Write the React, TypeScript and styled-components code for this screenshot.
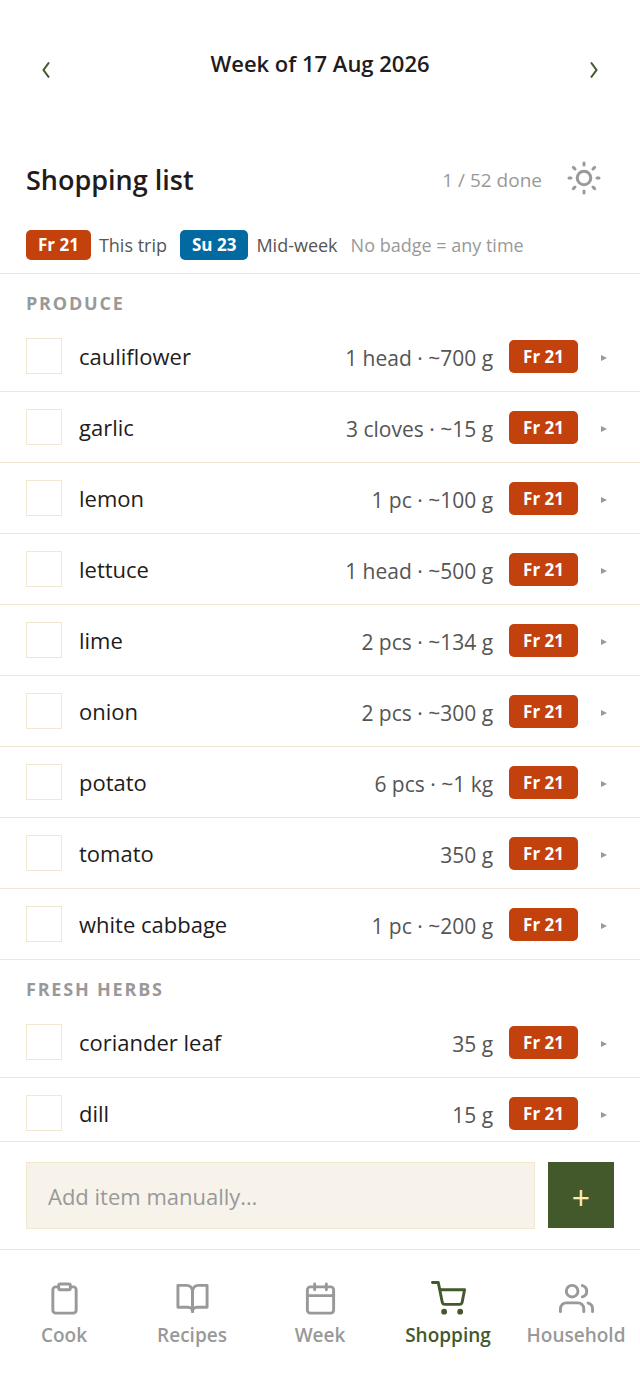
import React, { useState } from "react";
import styled, { createGlobalStyle } from "styled-components";

const color = {
  ink: "#231b1b",
  soft: "#555555",
  muted: "#999999",
  line: "#f1e8d2",
  field: "#f7f2ea",
  green: "#43592b",
  cream: "#fbeeb0",
  thisTrip: "#c2410c",
  midWeek: "#0369a1",
};

const GlobalStyle = createGlobalStyle`
  *, *::before, *::after { box-sizing: border-box; }
  body {
    margin: 0;
    background: #ffffff;
    color: ${color.ink};
    font-family: "Open Sans", "Noto Sans", sans-serif;
    font-size: 22px;
  }
  button, input { font: inherit; color: inherit; }
  button { padding: 0; border: 0; background: none; cursor: pointer; }
`;

const Page = styled.div`
  display: flex;
  flex-direction: column;
  height: 100vh;
`;

const WeekBar = styled.header`
  display: flex;
  align-items: flex-start;
  justify-content: space-between;
  padding: 47px 26px 59px;
`;

const WeekTitle = styled.h1`
  margin: 0;
  font-size: 22px;
  font-weight: 600;
  line-height: 32px;
`;

const ArrowButton = styled.button`
  display: flex;
  align-items: center;
  justify-content: center;
  width: 40px;
  height: 46px;
  color: ${color.green};
`;

const ListHead = styled.div`
  display: flex;
  align-items: center;
  padding: 0 26px;
  height: 52px;
`;

const ListTitle = styled.h2`
  flex: 1;
  margin: 0;
  padding-top: 4px;
  font-size: 27px;
  font-weight: 600;
  line-height: 40px;
`;

const Progress = styled.span`
  padding-top: 4px;
  color: ${color.muted};
  font-size: 19px;
`;

const ThemeButton = styled.button`
  display: flex;
  align-items: center;
  justify-content: center;
  width: 60px;
  height: 52px;
  margin-left: 12px;
  color: ${color.muted};
`;

const Legend = styled.div`
  display: flex;
  flex-wrap: wrap;
  align-items: center;
  gap: 13px;
  padding: 26px 26px 13px;
  border-bottom: 1px solid ${color.line};
`;

const LegendItem = styled.span<{ $muted?: boolean }>`
  display: flex;
  align-items: center;
  gap: 8px;
  color: ${(p) => (p.$muted ? color.muted : color.soft)};
  font-size: 18px;
  line-height: 30px;
`;

const Badge = styled.span<{ $tone?: "thisTrip" | "midWeek"; $large?: boolean }>`
  flex: none;
  padding: 0 ${(p) => (p.$large ? 14 : 12)}px;
  border-radius: 5px;
  background: ${(p) => color[p.$tone ?? "thisTrip"]};
  color: #ffffff;
  font-size: 17px;
  font-weight: 700;
  line-height: ${(p) => (p.$large ? 33 : 30)}px;
`;

const List = styled.main`
  flex: 1;
  min-height: 0;
  overflow-y: auto;
  scrollbar-width: none;
`;

const GroupTitle = styled.h3`
  margin: 0;
  padding: 17px 26px 6px;
  color: ${color.muted};
  font-size: 18px;
  font-weight: 700;
  letter-spacing: 0.1em;
  line-height: 24px;
  text-transform: uppercase;
`;

const Items = styled.ul`
  margin: 0;
  padding: 0;
  list-style: none;
`;

const Row = styled.li`
  display: flex;
  align-items: center;
  gap: 16px;
  height: 71px;
  padding: 0 26px;
  border-bottom: 1px solid ${color.line};
`;

const ItemLabel = styled.label`
  flex: 1;
  display: flex;
  align-items: center;
  gap: 17px;
  line-height: 32px;
`;

const Tick = styled.input`
  appearance: none;
  width: 36px;
  height: 36px;
  margin: 0;
  border: 1px solid ${color.line};
  background: #ffffff;

  &:checked { background: ${color.green}; }
`;

const Quantity = styled.span`
  padding-top: 4px;
  color: ${color.soft};
  font-size: 21px;
  line-height: 32px;
`;

const ExpandButton = styled.button`
  display: flex;
  align-items: center;
  justify-content: center;
  width: 20px;
  height: 36px;
  padding-top: 4px;
  color: ${color.muted};
`;

const AddForm = styled.form`
  display: flex;
  gap: 13px;
  padding: 20px 26px;
  border-top: 1px solid ${color.line};
`;

const AddField = styled.input`
  flex: 1;
  min-width: 0;
  height: 67px;
  padding: 0 21px;
  border: 1px solid ${color.line};
  border-radius: 0;
  background: ${color.field};

  &::placeholder { color: ${color.muted}; opacity: 1; }
`;

const AddButton = styled.button`
  width: 66px;
  height: 66px;
  padding-top: 4px;
  background: ${color.green};
  color: ${color.cream};
  font-size: 32px;
`;

const TabBar = styled.nav`
  display: grid;
  grid-template-columns: repeat(5, 1fr);
  padding: 31px 0 34px;
  border-top: 1px solid ${color.line};
`;

const Tab = styled.a<{ $active?: boolean }>`
  display: flex;
  flex-direction: column;
  align-items: center;
  gap: 3px;
  color: ${(p) => (p.$active ? color.green : color.muted)};
  font-size: 19px;
  font-weight: 600;
  line-height: 32px;
  text-decoration: none;
`;

const Glyph = styled.svg`
  display: block;
  fill: none;
  stroke: currentColor;
  stroke-linecap: round;
  stroke-linejoin: round;
`;

const Icon = ({ size = 35, children }: { size?: number; children: React.ReactNode }) => (
  <Glyph width={size} height={size} viewBox="0 0 24 24" strokeWidth={2} aria-hidden="true">
    {children}
  </Glyph>
);

const Chevron = ({ d }: { d: string }) => (
  <svg width="8" height="16" viewBox="0 0 8 16" fill="none" stroke="currentColor" strokeWidth="2" aria-hidden="true">
    <path d={d} />
  </svg>
);

const groups = [
  {
    title: "Produce",
    items: [
      ["cauliflower", "1 head · ~700 g"],
      ["garlic", "3 cloves · ~15 g"],
      ["lemon", "1 pc · ~100 g"],
      ["lettuce", "1 head · ~500 g"],
      ["lime", "2 pcs · ~134 g"],
      ["onion", "2 pcs · ~300 g"],
      ["potato", "6 pcs · ~1 kg"],
      ["tomato", "350 g"],
      ["white cabbage", "1 pc · ~200 g"],
    ],
  },
  {
    title: "Fresh herbs",
    items: [
      ["coriander leaf", "35 g"],
      ["dill", "15 g"],
    ],
  },
];

const tabs = [
  {
    label: "Cook",
    icon: (
      <>
        <path d="M16 4h2a2 2 0 0 1 2 2v14a2 2 0 0 1-2 2H6a2 2 0 0 1-2-2V6a2 2 0 0 1 2-2h2" />
        <rect x="8" y="2" width="8" height="4" rx="1" />
      </>
    ),
  },
  {
    label: "Recipes",
    icon: (
      <>
        <path d="M2 3h6a4 4 0 0 1 4 4v14a3 3 0 0 0-3-3H2z" />
        <path d="M22 3h-6a4 4 0 0 0-4 4v14a3 3 0 0 1 3-3h7z" />
      </>
    ),
  },
  {
    label: "Week",
    icon: (
      <>
        <rect x="3" y="4" width="18" height="18" rx="2" />
        <path d="M16 2v4M8 2v4M3 10h18" />
      </>
    ),
  },
  {
    label: "Shopping",
    icon: (
      <>
        <circle cx="9" cy="21" r="1" />
        <circle cx="20" cy="21" r="1" />
        <path d="M1 1h4l2.68 13.39a2 2 0 0 0 2 1.61h9.72a2 2 0 0 0 2-1.61L23 6H6" />
      </>
    ),
  },
  {
    label: "Household",
    icon: (
      <>
        <path d="M17 21v-2a4 4 0 0 0-4-4H5a4 4 0 0 0-4 4v2" />
        <circle cx="9" cy="7" r="4" />
        <path d="M23 21v-2a4 4 0 0 0-3-3.87M16 3.13a4 4 0 0 1 0 7.75" />
      </>
    ),
  },
];

export default function App() {
  const [ticked, setTicked] = useState<Record<string, boolean>>({});

  return (
    <Page>
      <GlobalStyle />
      <WeekBar>
        <ArrowButton type="button" aria-label="Previous week">
          <Chevron d="M7 .5L1.5 8L7 15.5" />
        </ArrowButton>
        <WeekTitle>Week of 17 Aug 2026</WeekTitle>
        <ArrowButton type="button" aria-label="Next week">
          <Chevron d="M1 .5L6.5 8L1 15.5" />
        </ArrowButton>
      </WeekBar>

      <ListHead>
        <ListTitle>Shopping list</ListTitle>
        <Progress>1 / 52 done</Progress>
        <ThemeButton type="button" aria-label="Switch theme">
          <Icon size={36}>
            <circle cx="12" cy="12" r="4.5" />
            <path d="M12 2v1.3M12 20.7V22M2 12h1.3M20.7 12H22M4.9 4.9l1.1 1.1M18 18l1.1 1.1M4.9 19.1L6 18M18 6l1.1-1.1" />
          </Icon>
        </ThemeButton>
      </ListHead>

      <Legend>
        <LegendItem><Badge>Fr 21</Badge>This trip</LegendItem>
        <LegendItem><Badge $tone="midWeek">Su 23</Badge>Mid-week</LegendItem>
        <LegendItem $muted>No badge = any time</LegendItem>
      </Legend>

      <List>
        {groups.map((group) => (
          <section key={group.title}>
            <GroupTitle>{group.title}</GroupTitle>
            <Items>
              {group.items.map(([name, quantity]) => (
                <Row key={name}>
                  <ItemLabel>
                    <Tick
                      type="checkbox"
                      checked={!!ticked[name]}
                      onChange={(e) => setTicked({ ...ticked, [name]: e.target.checked })}
                    />
                    {name}
                  </ItemLabel>
                  <Quantity>{quantity}</Quantity>
                  <Badge $large>Fr 21</Badge>
                  <ExpandButton type="button" aria-label={`Details for ${name}`}>
                    <svg width="6" height="6" viewBox="0 0 6 6" aria-hidden="true">
                      <path d="M0 0L6 3L0 6z" fill="currentColor" />
                    </svg>
                  </ExpandButton>
                </Row>
              ))}
            </Items>
          </section>
        ))}
      </List>

      <AddForm onSubmit={(e) => e.preventDefault()}>
        <AddField type="text" aria-label="Add item manually" placeholder="Add item manually…" />
        <AddButton type="submit" aria-label="Add item">+</AddButton>
      </AddForm>

      <TabBar>
        {tabs.map((tab) => (
          <Tab key={tab.label} href={`#${tab.label.toLowerCase()}`} $active={tab.label === "Shopping"}>
            <Icon>{tab.icon}</Icon>
            {tab.label}
          </Tab>
        ))}
      </TabBar>
    </Page>
  );
}
